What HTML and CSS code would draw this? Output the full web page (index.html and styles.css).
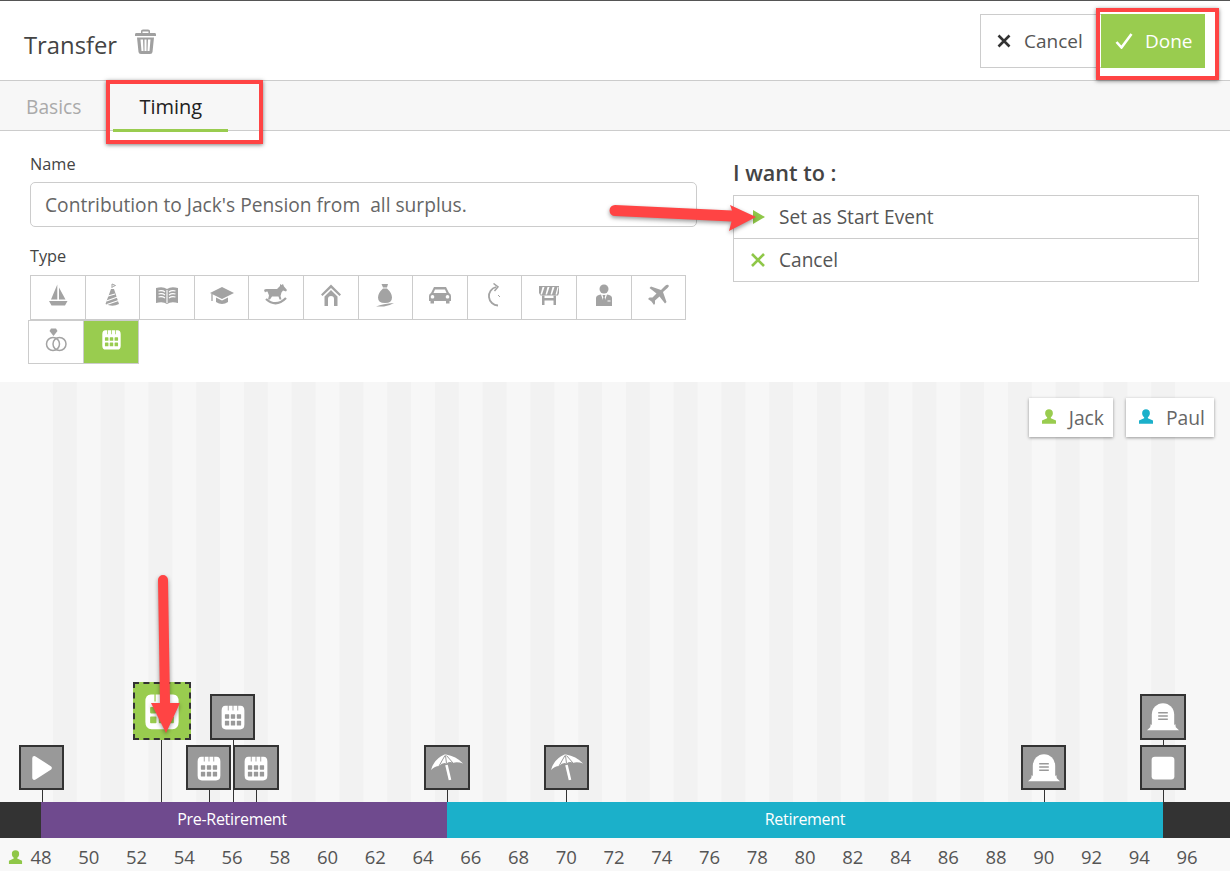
FILE: index.html
```html
<!DOCTYPE html>
<html lang="en">
<head>
<meta charset="utf-8">
<title>Transfer</title>
<link rel="stylesheet" href="styles.css">
</head>
<body>
<svg class="defs" width="0" height="0" aria-hidden="true">
  <symbol id="i-boat" viewBox="0 0 24 24"><path d="M11.300 1.500V16.500H5ZM13 4.500 19.500 16.500H13ZM3 18H21.500L19 22.500H5.500Z"/></symbol>
  <symbol id="i-hat" viewBox="0 0 24 24"><path d="M11 6h3l5 15q-6.500 3.500-13.500 0Z"/><path d="M8 13l7-2M6.500 18l11-4M7 21.500l11.500-4" stroke="#fff" stroke-width="1.300" fill="none"/><path d="M12 5V1l3.500 1.500-3 1.200" stroke="currentColor" fill="none" stroke-width="1"/></symbol>
  <symbol id="i-book" viewBox="0 0 24 24"><path d="M1 5Q8 3 12 6Q16 3 23 5V20Q16 18 12 21Q8 18 1 20Z"/><path d="M12 7V20M3.500 8q4-1 6.500 1M3.500 11q4-1 6.500 1M3.500 14q4-1 6.500 1M14 9q2.500-2 6.500-1M14 12q2.500-2 6.500-1M14 15q2.500-2 6.500-1" stroke="#fff" stroke-width="1.100" fill="none"/></symbol>
  <symbol id="i-cap" viewBox="0 0 24 24"><path d="M12 4 24 10 12 16 0 10Z"/><path d="M6 14.500V19Q12 23 18 19V14.500L12 17.500Z"/><path d="M2 11V18" stroke="currentColor" stroke-width="1.300" fill="none"/></symbol>
  <symbol id="i-horse" viewBox="0 0 24 24"><path d="M0 7q1-1.500 4-1h9l3-3V1l1.500 1L19 1l1 2.500 3 3.500-1 1.500-3-1-1.500 2-1 3.500 1 3.500h-2l-1-3H8l-2 3H4l1-4-1.500-4q-2 0-2.500 1Z"/><path d="M2 16q10 9 20-1" stroke="currentColor" stroke-width="2.300" fill="none"/></symbol>
  <symbol id="i-house" viewBox="0 0 24 24"><path d="M12 1.500 22 11.500l-1.500 1.500L12 5 3.500 13 2 11.500ZM12 7l6.500 6.500V23H15v-7a3 3 0 0 0-6 0v7H5.500v-9.500Z"/></symbol>
  <symbol id="i-bag" viewBox="0 0 24 24"><path d="M8.500 1H15l-1 3.500h-4ZM10 5.500h4Q19 10 19 14.500q0 5.500-7 5.500t-7-5.500Q5 10 10 5.500Z"/><path d="M3 23.500q7-3 18-3.500-5 3-10 3.500Z"/></symbol>
  <symbol id="i-car" viewBox="0 0 24 24"><path fill-rule="evenodd" d="M6 4H18L21 10Q23 11 23 13V18H21.500V20.500H18V18H6V20.500H2.500V18H1V13Q1 11 3 10ZM7 6.500 5.500 10H18.500L17 6.500ZM4.500 12a1.800 1.800 0 1 0 .01 0ZM19.500 12a1.800 1.800 0 1 0 .01 0Z"/></symbol>
  <symbol id="i-clock" viewBox="0 0 24 24"><path d="M15 22.500A9.400 9.400 0 0 1 13 4" stroke="currentColor" stroke-width="1.800" fill="none"/><path d="M10.500.5 15 3.800 11.500 8" stroke="currentColor" stroke-width="1.500" fill="none"/><path d="M15 12l2 2" stroke="currentColor" fill="none"/></symbol>
  <symbol id="i-barrier" viewBox="0 0 24 24"><path fill-rule="evenodd" d="M2 3H22V10L21 12.500H3.500L2 10ZM7.500 4H5.500L3.500 11.500H5ZM12.500 4H10.500L8.500 11.500H10ZM17.500 4H15.500L13.500 11.500H15ZM21.500 4H20.500L18.500 11.500H20Z"/><path d="M5 12.500H7.500V15H16.500V12.500H19V22H16.500V17.500H7.500V22H5Z"/></symbol>
  <symbol id="i-suit" viewBox="0 0 24 24"><circle cx="12" cy="6" r="4.500"/><path d="M4 23V15Q4 12 9 11.500L12 20 15 11.500Q20 12 20 15V23Z"/><path d="M10.500 12h3l-.8 2.500 1 4-1.700 3.500-1.700-3.500 1-4z"/><path d="M15.500 18h3" stroke="#fff" stroke-width="1"/></symbol>
  <symbol id="i-plane" viewBox="0 0 24 24"><path d="M22.500 2Q21 1 19 3L15 7 5 3.500 3.500 5 10.500 10.500 6.500 14.500H3.500L2 16 5.500 18.500 8 22 9 20.500V17.500L13.500 13.500 19 20.500 20.500 19 17 9 21.500 5Q23.500 3.500 22.500 2Z"/></symbol>
  <symbol id="i-rings" viewBox="0 0 24 24"><g fill="none" stroke="currentColor" stroke-width="1.500"><circle cx="9" cy="16" r="6.500"/><circle cx="15.500" cy="16" r="6.500"/></g><path d="M7 .5h5l1.500 2.500-4 5-4-5Z"/></symbol>
  <symbol id="i-cal" viewBox="0 0 24 24"><path fill-rule="evenodd" d="M5 1.500H19Q22.500 1.500 22.500 6V19Q22.500 23.500 18.500 23.500H5.500Q1.500 23.500 1.500 19V6Q1.500 1.500 5 1.500ZM7.200 1.500V6H8V1.500ZM11.600 1.500V6H12.400V1.500ZM16 1.500V6H16.800V1.500ZM5 9.500Q4.500 9.500 4.500 10V13Q4.500 13.500 5 13.500H8Q8.500 13.500 8.500 13V10Q8.500 9.500 8 9.500ZM10.500 9.500Q10 9.500 10 10V13Q10 13.500 10.500 13.500H13.500Q14 13.500 14 13V10Q14 9.500 13.500 9.500ZM16 9.500Q15.500 9.500 15.500 10V13Q15.500 13.500 16 13.500H19Q19.500 13.500 19.500 13V10Q19.500 9.500 19 9.500ZM5 15.500Q4.500 15.500 4.500 16V19.300Q4.500 19.800 5 19.800H8Q8.500 19.800 8.500 19.300V16Q8.500 15.500 8 15.500ZM10.500 15.500Q10 15.500 10 16V19.300Q10 19.800 10.500 19.800H13.500Q14 19.800 14 19.300V16Q14 15.500 13.500 15.500ZM16 15.500Q15.500 15.500 15.500 16V19.300Q15.500 19.800 16 19.800H19Q19.500 19.800 19.500 19.300V16Q19.500 15.500 19 15.500Z"/></symbol>
  <symbol id="i-person" viewBox="0 0 24 24"><path d="M12 1a5.800 5.800 0 0 1 5.800 6c0 2.500-1.200 4.800-3 6v1.500L22.500 18v5H1.500v-5l7.700-3.500V13c-1.800-1.200-3-3.500-3-6A5.800 5.800 0 0 1 12 1Z"/></symbol>
  <symbol id="i-trash" viewBox="0 0 21 25"><path d="M6 4V2Q6 .5 8 .5H13Q15 .5 15 2V4H20Q21 4 21 5.500V7H0V5.500Q0 4 1 4ZM7.500 2.500V4H13.500V2.500Z" fill-rule="evenodd"/><path fill-rule="evenodd" d="M2 8.500H19L17.500 23Q17.300 25 15 25H6Q3.700 25 3.500 23ZM5.500 10.500 6.500 22H8.500L8 10.500ZM9.500 10.500V22H11.500V10.500ZM13 10.500 12.500 22H14.500L15.500 10.500Z"/></symbol>
  <symbol id="i-play" viewBox="0 0 24 24"><path d="M5 3 19 12 5 21Z" stroke="currentColor" stroke-width="4" stroke-linejoin="round"/></symbol>
  <symbol id="i-stop" viewBox="0 0 24 24"><rect x="1.500" y="1.500" width="21" height="21" rx="3"/></symbol>
  <symbol id="i-umbrella" viewBox="0 0 32 28"><path d="M13.500 0.500h1.500Q25 2 32 9.500Q26 7.500 22 9Q19 7 15.500 9.500Q12 8 8 12Q4 12 0 16Q3 5 13.500 0.500Z"/><path d="M14 1.500 8 12M14.500 1.500 15.500 9.500M15.500 1.500 22 9" stroke="#999" stroke-width="1" fill="none"/><path d="M15.500 11 19 26" stroke="currentColor" stroke-width="2.600" fill="none"/></symbol>
  <symbol id="i-grave" viewBox="0 0 30 26"><path d="M4.500 23V11A10.500 11 0 0 1 25.500 11V23Z"/><path d="M0 25.500 3 22.500 3.500 19.500 6 22H24L26.500 19.500 27 22.500 30 25.500Z"/><path d="M10.500 9H19.500M10.500 12H19.500M10.500 15H19.500" stroke="#999" stroke-width="1.400"/></symbol>
</svg>

<main class="app">
  <header class="head">
    <div class="head-title">
      <h1 class="title">Transfer</h1>
      <svg class="trash"><use href="#i-trash"/></svg>
    </div>
    <div class="head-actions">
      <button class="btn btn-cancel"><svg class="btn-ic" viewBox="0 0 16 16"><path d="M2.500 2.500 13.500 13.500M13.500 2.500 2.500 13.500"/></svg>Cancel</button>
      <button class="btn btn-done"><svg class="btn-ic btn-ic-lg" viewBox="0 0 18 16"><path d="M1.500 9 6.500 14.500 16.500 1"/></svg>Done</button>
    </div>
  </header>

  <nav class="tabs">
    <a class="tab">Basics</a>
    <a class="tab tab-active">Timing</a>
  </nav>

  <section class="form">
    <div class="form-left">
      <label class="label label-name">Name</label>
      <div class="input">Contribution to Jack's Pension from&nbsp; all surplus.</div>
      <label class="label label-type">Type</label>
      <div class="types">
        <span class="type"><svg class="type-ic"><use href="#i-boat"/></svg></span>
        <span class="type"><svg class="type-ic"><use href="#i-hat"/></svg></span>
        <span class="type"><svg class="type-ic"><use href="#i-book"/></svg></span>
        <span class="type"><svg class="type-ic"><use href="#i-cap"/></svg></span>
        <span class="type"><svg class="type-ic"><use href="#i-horse"/></svg></span>
        <span class="type"><svg class="type-ic"><use href="#i-house"/></svg></span>
        <span class="type"><svg class="type-ic"><use href="#i-bag"/></svg></span>
        <span class="type"><svg class="type-ic"><use href="#i-car"/></svg></span>
        <span class="type"><svg class="type-ic"><use href="#i-clock"/></svg></span>
        <span class="type"><svg class="type-ic"><use href="#i-barrier"/></svg></span>
        <span class="type"><svg class="type-ic"><use href="#i-suit"/></svg></span>
        <span class="type type-last"><svg class="type-ic"><use href="#i-plane"/></svg></span>
      </div>
      <div class="types types-second">
        <span class="type"><svg class="type-ic"><use href="#i-rings"/></svg></span>
        <span class="type type-on"><svg class="type-ic-small"><use href="#i-cal"/></svg></span>
      </div>
    </div>
    <div class="form-right">
      <h2 class="want">I want to :</h2>
      <ul class="actions">
        <li class="action"><svg class="action-ic" viewBox="0 0 16 16"><path class="solid" d="M3 1 15 8 3 15Z"/></svg>Set as Start Event</li>
        <li class="action"><svg class="action-ic" viewBox="0 0 16 16"><path d="M2 2 14 14M14 2 2 14"/></svg>Cancel</li>
      </ul>
    </div>
  </section>

  <section class="timeline">
    <div class="legend">
      <span class="chip"><svg class="chip-ic chip-jack"><use href="#i-person"/></svg>Jack</span>
      <span class="chip"><svg class="chip-ic chip-paul"><use href="#i-person"/></svg>Paul</span>
    </div>
    <div class="marker m-play"><svg class="mk-ic"><use href="#i-play"/></svg></div>
    <div class="marker m-sel"><svg class="mk-ic-lg"><use href="#i-cal"/></svg></div>
    <div class="marker m-cal-top"><svg class="mk-ic"><use href="#i-cal"/></svg></div>
    <div class="marker m-cal-a"><svg class="mk-ic"><use href="#i-cal"/></svg></div>
    <div class="marker m-cal-b"><svg class="mk-ic"><use href="#i-cal"/></svg></div>
    <div class="marker m-umb-a"><svg class="mk-ic-wide"><use href="#i-umbrella"/></svg></div>
    <div class="marker m-umb-b"><svg class="mk-ic-wide"><use href="#i-umbrella"/></svg></div>
    <div class="marker m-grave-a"><svg class="mk-ic-wide"><use href="#i-grave"/></svg></div>
    <div class="marker m-grave-b"><svg class="mk-ic-wide"><use href="#i-grave"/></svg></div>
    <div class="marker m-stop"><svg class="mk-ic"><use href="#i-stop"/></svg></div>
  </section>

  <div class="bar">
    <div class="seg seg-lead"></div>
    <div class="seg seg-pre">Pre-Retirement</div>
    <div class="seg seg-ret">Retirement</div>
    <div class="seg seg-tail"></div>
  </div>

  <div class="axis">
    <svg class="axis-ic"><use href="#i-person"/></svg>
    <span class="tick">48</span><span class="tick">50</span><span class="tick">52</span><span class="tick">54</span><span class="tick">56</span><span class="tick">58</span><span class="tick">60</span><span class="tick">62</span><span class="tick">64</span><span class="tick">66</span><span class="tick">68</span><span class="tick">70</span><span class="tick">72</span><span class="tick">74</span><span class="tick">76</span><span class="tick">78</span><span class="tick">80</span><span class="tick">82</span><span class="tick">84</span><span class="tick">86</span><span class="tick">88</span><span class="tick">90</span><span class="tick">92</span><span class="tick">94</span><span class="tick">96</span>
  </div>

  <div class="note note-done"></div>
  <div class="note note-timing"></div>
  <svg class="arrows" viewBox="0 0 1230 871">
    <path d="M615 205 732 210.500 730 205 756 217 729 231 731.500 221.500 615 216A5.500 5.500 0 0 1 615 205Z"/>
    <path d="M158 580A5 5 0 0 1 168 580L170 703H180L166 733 151 703H160Z"/>
  </svg>
</main>
</body>
</html>
```
FILE: styles.css
```css
* { box-sizing: border-box; }
html, body { margin: 0; padding: 0; }
body { width: 1230px; height: 871px; overflow: hidden; background: #fff; font-family: "Open Sans", "DejaVu Sans", sans-serif; color: #555; }
.defs { position: absolute; }
svg { fill: currentColor; display: block; }

.app { position: relative; width: 1230px; height: 871px; display: flex; flex-direction: column; border-top: 1px solid #555; }

.head { height: 80px; flex: none; display: flex; justify-content: space-between; border-bottom: 1px solid #ccc; padding: 13px 25px 0 24px; background: #fff; }
.head-title { display: flex; align-items: flex-start; }
.title { margin: 15px 0 0; font-size: 23.800px; line-height: 32px; font-weight: 400; color: #444; }
.trash { width: 21px; height: 25px; margin: 15px 0 0 18px; color: #a0a0a0; }
.head-actions { display: flex; height: 54px; }
.btn { height: 54px; margin: 0; display: flex; align-items: center; font: 400 19px "Open Sans", sans-serif; border-radius: 0; }
.btn-ic { width: 16px; height: 16px; fill: none; stroke: currentColor; stroke-width: 2.600; }
.btn-ic-lg { width: 18px; height: 16px; margin-right: 12px; }
.btn-cancel { width: 121px; padding: 0 0 0 15px; gap: 12px; background: #fff; border: 1px solid #ccc; border-right: 0; color: #555; }
.btn-cancel .btn-ic { color: #333; }
.btn-done { width: 104px; padding: 0 0 0 14px; background: #99cc4f; border: 0; color: #fff; }

.tabs { height: 50px; flex: none; display: flex; background: #f7f7f7; border-bottom: 1px solid #ccc; padding-left: 26px; }
.tab { position: relative; font-size: 19.200px; line-height: 52px; color: #aaa; margin-right: 58px; }
.tab-active { color: #222; font-size: 20px; }
.tab-active::after { content: ""; position: absolute; left: -26px; width: 115px; bottom: -2px; height: 3px; background: #99cc4f; }

.form { height: 251px; flex: none; display: flex; background: #fff; }
.form-left { width: 733px; padding: 23px 0 0 30px; }
.label { display: block; font-size: 16.300px; line-height: 20px; color: #444; }
.input { width: 667px; height: 45px; margin-top: 8px; padding-left: 14px; border: 1px solid #ccc; border-radius: 5px; font-size: 19.200px; line-height: 44px; color: #666; background: #fff; }
.label-type { margin-top: 19px; }
.types { display: flex; margin-top: 9px; }
.types-second { margin: 0 0 0 -2px; }
.type { width: 54.600px; height: 45px; border: 1px solid #ccc; border-right: 0; display: flex; justify-content: center; padding-top: 7px; color: #a3a3a3; }
.type-last { width: 55.400px; border-right: 1px solid #ccc; }
.types-second .type { width: 55px; height: 44px; border-top: 1px solid #ccc; }
.types-second .type-on { width: 56px; padding-top: 8px; background: #99cc4f; color: #fff; border-right: 1px solid #ccc; }
.type-ic { width: 24px; height: 24px; }
.type-ic-small { width: 21px; height: 21px; }

.form-right { width: 466px; padding-top: 27px; }
.want { margin: 0 0 7px; font-size: 21.600px; line-height: 30px; font-weight: 600; color: #444; }
.actions { list-style: none; margin: 0; padding: 0; border: 1px solid #ccc; }
.action { height: 42px; display: flex; align-items: center; padding-left: 16px; gap: 13px; font-size: 19.100px; color: #555; }
.action + .action { height: 43px; border-top: 1px solid #ccc; }
.action-ic { width: 16px; height: 16px; fill: none; stroke: #8fc748; stroke-width: 2.600; }
.solid { fill: #8fc748; stroke: none; }

.timeline { position: relative; flex: 1; display: block; background-color: #f7f7f7; background-image: linear-gradient(90deg, #f7f7f7 53px, transparent 53px, transparent 1175px, #f7f7f7 1175px), linear-gradient(90deg, #f2f2f2 0 24px, transparent 24px); background-size: 100% 100%, 47.750px 100%; background-position: 0 0, 5.200px 0; }
.legend { display: flex; justify-content: flex-end; gap: 13px; padding: 16px 16px 0 0; }
.chip { height: 39px; display: flex; align-items: center; gap: 12px; padding: 0 9px 0 12px; background: #fff; font-size: 19.300px; color: #666; box-shadow: 0 1px 3px rgba(0,0,0,.4); }
.chip-ic { width: 16px; height: 17px; margin-top: -2px; }
.chip-jack { color: #99cc4f; }
.chip-paul { color: #1bb0ca; }

.marker { position: absolute; top: 363px; width: 45px; height: 45px; display: flex; align-items: center; justify-content: center; background: #999; border: 2px solid #333; color: #fff; }
.marker::after { content: ""; position: absolute; left: 21px; top: 100%; margin-top: 2px; width: 1px; height: 12px; background: #333; }
.mk-ic { width: 26px; height: 26px; }
.mk-ic-lg { width: 38px; height: 38px; }
.mk-ic-wide { width: 32px; height: 28px; }
.m-play { left: 19px; }
.m-sel { left: 133px; top: 300px; width: 58px; height: 58px; background: #99cc4f; border: 2px dashed #333; }
.m-sel::after { left: 26px; height: 62px; }
.m-cal-top { left: 210px; top: 312px; height: 46px; }
.m-cal-top::after { height: 62px; }
.m-cal-a { left: 186px; }
.m-cal-b { left: 233px; width: 46px; }
.m-umb-a { left: 424px; width: 46px; }
.m-umb-b { left: 544px; }
.m-umb-b::after { left: 20px; }
.m-grave-a { left: 1021px; }
.m-grave-b { left: 1140px; top: 312px; width: 46px; height: 46px; }
.m-grave-b::after { height: 5px; }
.m-stop { left: 1140px; width: 46px; }

.bar { height: 36px; flex: none; display: flex; background: #333; color: #fff; font-size: 16px; line-height: 34px; letter-spacing: -.3px; text-align: center; }
.seg-lead { width: 41px; }
.seg-pre { width: 406px; padding-right: 24px; background: #6f4a8e; }
.seg-ret { width: 716px; background: #1bb0ca; }
.seg-tail { flex: 1; }

.axis { height: 33px; flex: none; display: flex; align-items: center; padding: 4px 0 0 8px; background: #f8f8f8; font-size: 18.500px; color: #555; }
.axis-ic { flex: none; width: 15px; height: 16px; margin-right: -5.900px; color: #8fc748; }
.tick { flex: none; width: 47.750px; text-align: center; }

.note { position: absolute; border: 4px solid #ff4444; box-shadow: 0 1px 4px rgba(0,0,0,.5); }
.note-done { left: 1096px; top: 7px; width: 123px; height: 72px; }
.note-timing { left: 106px; top: 79px; width: 157px; height: 64px; }
.arrows { position: absolute; left: 0; top: -1px; width: 1230px; height: 871px; fill: #ff4444; filter: drop-shadow(0 2px 2px rgba(0,0,0,.4)); pointer-events: none; }
```
